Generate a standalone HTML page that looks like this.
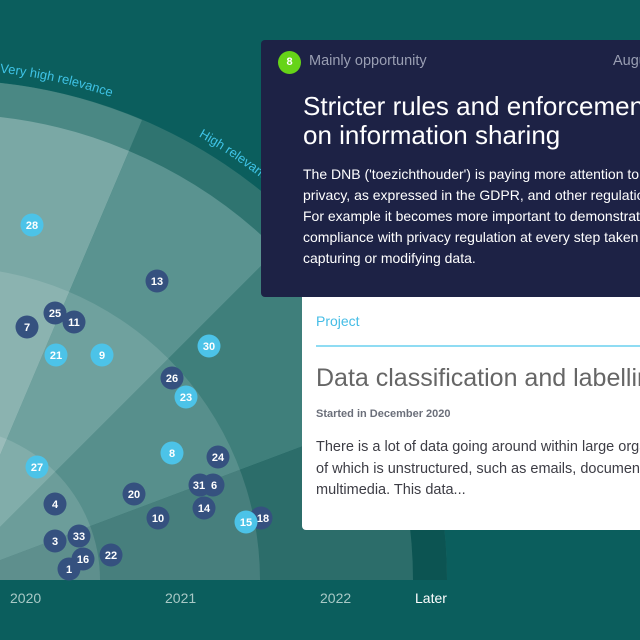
<!DOCTYPE html>
<html><head><meta charset="utf-8"><style>
html,body{margin:0;padding:0;width:640px;height:640px;overflow:hidden;background:#0b5e5d;font-family:"Liberation Sans",sans-serif}
#w{position:relative;width:640px;height:640px;overflow:hidden}
.abs{position:absolute}
</style></head><body><div id="w">
<svg class="abs" style="left:0;top:0" width="640" height="640" viewBox="0 0 640 640">
<defs>
<clipPath id="c"><rect x="0" y="0" width="640" height="580"/></clipPath>
<path id="arc" d="M -141.6 77.7 A 510 510 0 0 1 457 580"/>
</defs>
<rect width="640" height="640" fill="#0b5e5d"/>
<g clip-path="url(#c)">
<path d="M-53 580 L-53 80 A500 500 0 0 1 447 580 Z" fill="#2f7470"/>
<path d="M-53 580 L447 580 A500 500 0 0 0 415 404 Z" fill="#0c5452"/>
<path d="M-53 580 L-53 80 A500 500 0 0 1 142 120 Z" fill="#4a8884"/>
<path d="M-53 580 L-53 114 A466 466 0 0 1 129 151 Z" fill="#7aa8a5"/>
<path d="M-53 580 L129 151 A466 466 0 0 1 277 250 Z" fill="#5a9390"/>
<path d="M-53 580 L277 250 A466 466 0 0 1 383 416 Z" fill="#3f7f7b"/>
<path d="M-53 580 L383 416 A466 466 0 0 1 413 580 Z" fill="#2c6d6a"/>
<path d="M-53 580 L-53 267 A313 313 0 0 1 260 580 Z" fill="#fff" fill-opacity="0.13"/>
<path d="M-53 580 L-53 427 A153 153 0 0 1 100 580 Z" fill="#fff" fill-opacity="0.13"/>
</g>
<text font-size="13" fill="#3fc3e6" font-family="Liberation Sans,sans-serif"><textPath href="#arc" startOffset="142">Very high relevance</textPath></text>
<text font-size="13" fill="#3fc3e6" font-family="Liberation Sans,sans-serif"><textPath href="#arc" startOffset="352">High relevance</textPath></text>
<g font-size="14" fill="#a9c9c6"><text x="10" y="603">2020</text><text x="165" y="603">2021</text><text x="320" y="603">2022</text></g>
<text x="415" y="603" font-size="14" fill="#fff">Later</text>
<g font-size="11" font-weight="bold" fill="#fff" text-anchor="middle">
<g fill="#35517f">
<circle cx="157" cy="281" r="11.5"/><circle cx="55" cy="313" r="11.5"/><circle cx="74" cy="322" r="11.5"/><circle cx="27" cy="327" r="11.5"/><circle cx="172" cy="378" r="11.5"/><circle cx="218" cy="457" r="11.5"/><circle cx="200" cy="485" r="11.5"/><circle cx="213" cy="485" r="11.5"/><circle cx="134" cy="494" r="11.5"/><circle cx="55" cy="504" r="11.5"/><circle cx="204" cy="508" r="11.5"/><circle cx="158" cy="518" r="11.5"/><circle cx="261" cy="518" r="11.5"/><circle cx="55" cy="541" r="11.5"/><circle cx="79" cy="536" r="11.5"/><circle cx="69" cy="569" r="11.5"/><circle cx="83" cy="559" r="11.5"/><circle cx="111" cy="555" r="11.5"/>
</g>
<g fill="#4cc3e8">
<circle cx="32" cy="225" r="11.5"/><circle cx="56" cy="355" r="11.5"/><circle cx="102" cy="355" r="11.5"/><circle cx="209" cy="346" r="11.5"/><circle cx="186" cy="397" r="11.5"/><circle cx="172" cy="453" r="11.5"/><circle cx="37" cy="467" r="11.5"/><circle cx="246" cy="522" r="11.5"/>
</g>
<text x="32" y="229">28</text><text x="157" y="285">13</text><text x="55" y="317">25</text><text x="74" y="326">11</text><text x="27" y="331">7</text><text x="56" y="359">21</text><text x="102" y="359">9</text><text x="209" y="350">30</text><text x="172" y="382">26</text><text x="186" y="401">23</text><text x="172" y="457">8</text><text x="218" y="461">24</text><text x="37" y="471">27</text><text x="199" y="489">31</text><text x="214" y="489">6</text><text x="134" y="498">20</text><text x="55" y="508">4</text><text x="204" y="512">14</text><text x="158" y="522">10</text><text x="263" y="522">18</text><text x="246" y="526">15</text><text x="55" y="545">3</text><text x="79" y="540">33</text><text x="83" y="563">16</text><text x="111" y="559">22</text><text x="69" y="573">1</text>
</g>
</svg>

<div class="abs" style="left:302px;top:290px;width:338px;height:240px;background:#fff;border-radius:4px 0 0 4px;overflow:hidden">
<div class="abs" style="left:14px;top:23px;font-size:14px;color:#45bde6">Project</div>
<div class="abs" style="left:14px;top:55px;width:330px;height:2px;background:#8fdcf3"></div>
<div class="abs" style="left:14px;top:74px;font-size:25px;color:#666;white-space:nowrap">Data classification and labelling</div>
<div class="abs" style="left:14px;top:118px;font-size:11px;font-weight:bold;color:#6b6f7a">Started in December 2020</div>
<div class="abs" style="left:14px;top:147px;font-size:14.5px;line-height:21.5px;color:#3d3d45;white-space:nowrap">There is a lot of data going around within large organisations,<br>of which is unstructured, such as emails, documents and<br>multimedia. This data...</div>
</div>

<div class="abs" style="left:261px;top:40px;width:379px;height:257px;background:#1d2245;border-radius:4px 0 0 4px;overflow:hidden">
<div class="abs" style="left:17px;top:11px;width:23px;height:23px;border-radius:50%;background:#66d418;color:#fff;font-size:11px;font-weight:bold;text-align:center;line-height:23px">8</div>
<div class="abs" style="left:48px;top:13px;font-size:14.5px;color:#9a9fb3;white-space:nowrap">Mainly opportunity</div>
<div class="abs" style="left:352px;top:13px;font-size:14.5px;color:#9a9fb3">August</div>
<div class="abs" style="left:42px;top:52px;font-size:26px;line-height:29px;color:#fff;white-space:nowrap">Stricter rules and enforcement<br>on information sharing</div>
<div class="abs" style="left:42px;top:124px;font-size:14px;line-height:21px;color:#fff;white-space:nowrap">The DNB ('toezichthouder') is paying more attention to<br>privacy, as expressed in the GDPR, and other regulations.<br>For example it becomes more important to demonstrate<br>compliance with privacy regulation at every step taken in<br>capturing or modifying data.</div>
</div>
</div></body></html>
